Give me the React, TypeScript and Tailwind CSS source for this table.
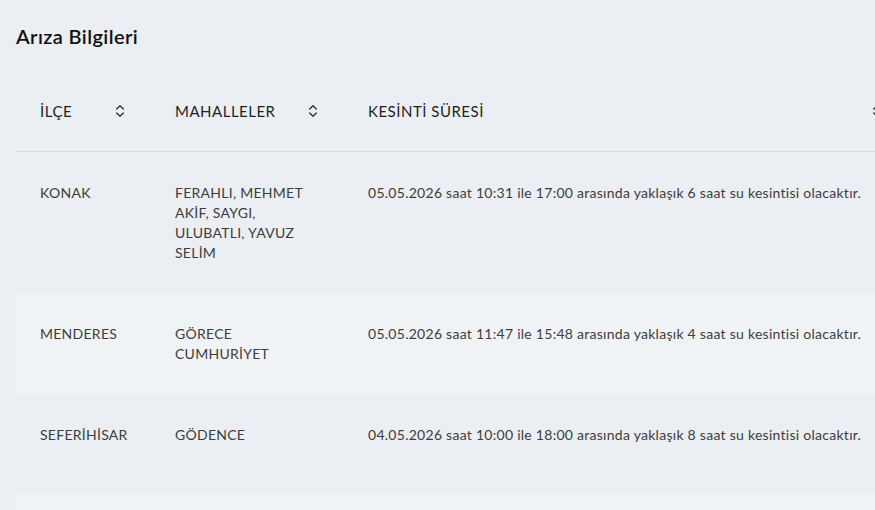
import { ChevronsUpDown } from "lucide-react"

interface Outage {
    district: string
    neighborhoods: string
    duration: string
}

const rows: Outage[] = [
    {
        district: "KONAK",
        neighborhoods: "FERAHLI, MEHMET AKİF, SAYGI, ULUBATLI, YAVUZ SELİM",
        duration: "05.05.2026 saat 10:31 ile 17:00 arasında yaklaşık 6 saat su kesintisi olacaktır.",
    },
    {
        district: "MENDERES",
        neighborhoods: "GÖRECE CUMHURİYET",
        duration: "05.05.2026 saat 11:47 ile 15:48 arasında yaklaşık 4 saat su kesintisi olacaktır.",
    },
    {
        district: "SEFERİHİSAR",
        neighborhoods: "GÖDENCE",
        duration: "04.05.2026 saat 10:00 ile 18:00 arasında yaklaşık 8 saat su kesintisi olacaktır.",
    },
    { district: "", neighborhoods: "", duration: "" },
]

function SortHead({ label, className }: { label: string; className: string }) {
    return (
        <div className={`flex items-center justify-between pl-6 pr-[23px] ${className}`}>
            <span>{label}</span>
            <ChevronsUpDown size={16} strokeWidth={2} className="text-[#333]" />
        </div>
    )
}

export default function App() {
    return (
        <div className="w-[875px] h-[510px] overflow-hidden bg-[#ebeef2] text-[#3d3d3d]" style={{ fontFamily: "Lato, 'Noto Sans', sans-serif" }}>
            <div className="pl-4 pt-6">
                <h1 className="text-[20px] leading-6 font-semibold tracking-[0.4px] text-[#111]">Arıza Bilgileri</h1>

                <div className="mt-[23px] w-[892px]">
                    <div className="flex h-[81px] items-center border-b border-[#d6dbe0] text-[15px] tracking-[0.5px] text-[#1f1f1f]">
                        <SortHead label="İLÇE" className="w-[135px]" />
                        <SortHead label="MAHALLELER" className="w-[193px]" />
                        <SortHead label="KESİNTİ SÜRESİ" className="flex-1" />
                    </div>

                    {rows.map((r, i) => (
                        <div key={i} className={`flex min-h-[100px] py-[30px] text-[14px] leading-5 tracking-[0.27px] ${i % 2 === 1 ? "bg-[#f0f3f6]" : ""}`}>
                            <div className="w-[135px] pl-6 pt-px">{r.district}</div>
                            <div className="w-[193px] pl-6 pr-[40px] pt-px">{r.neighborhoods}</div>
                            <div className="flex-1 pl-6 pt-px">{r.duration}</div>
                        </div>
                    ))}
                </div>
            </div>
        </div>
    )
}
